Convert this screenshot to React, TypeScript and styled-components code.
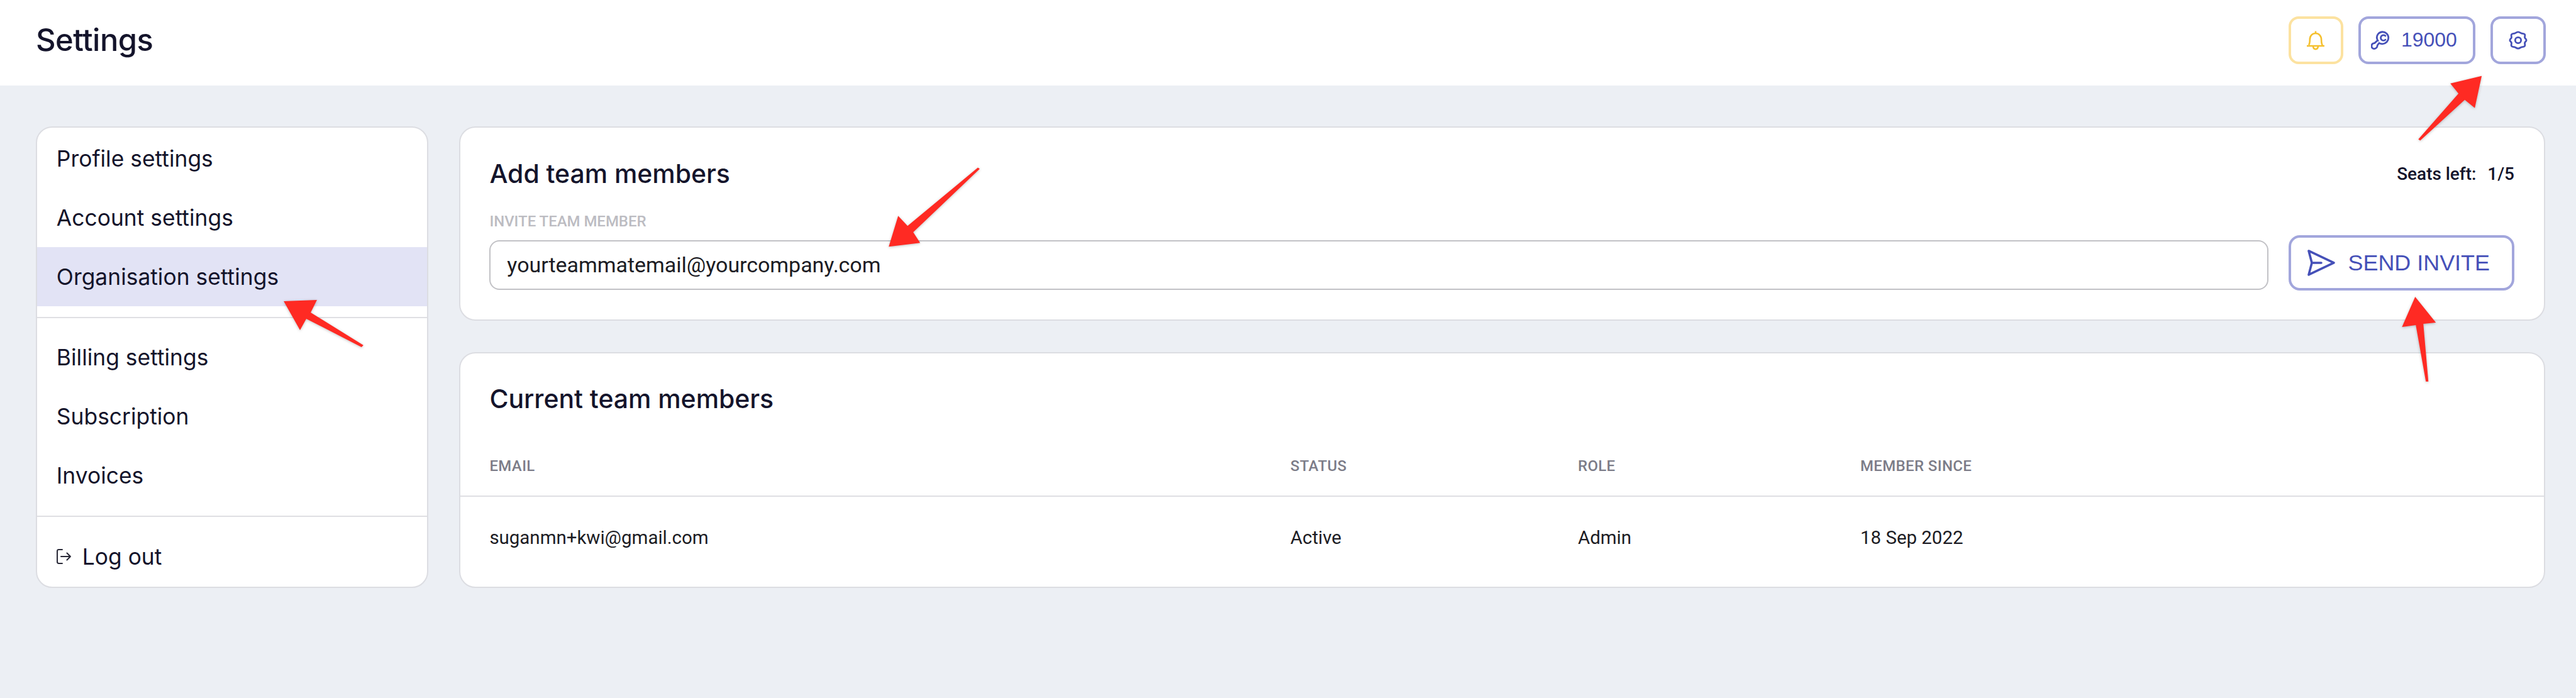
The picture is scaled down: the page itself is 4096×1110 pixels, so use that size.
import styled, { createGlobalStyle } from "styled-components";

const GlobalStyle = createGlobalStyle`
  html, body {
    margin: 0;
    padding: 0;
    overflow: hidden;
    background-color: #eceff4;
  }
  #root {
    zoom: 0.998;
    width: 4104px;
    height: 1112px;
  }
  * {
    box-sizing: border-box;
  }
`;

const Page = styled.div`
  position: relative;
  width: 4104px;
  height: 1112px;
  background-color: #eceff4;
  font-family: "Inter", "Liberation Sans", sans-serif;
  color: #14142b;
`;

const TopBar = styled.header`
  display: flex;
  align-items: center;
  justify-content: space-between;
  height: 136px;
  padding: 0 48px 8px 57px;
  background-color: white;
`;

const PageTitle = styled.h1`
  margin: 0;
  font-size: 49px;
  font-weight: 500;
  letter-spacing: -0.5px;
`;

const TopActions = styled.div`
  display: flex;
  gap: 24px;
`;

const ActionButton = styled.button<{ $warn?: boolean; $w: number }>`
  display: flex;
  align-items: center;
  justify-content: center;
  gap: 18px;
  width: ${(props) => props.$w}px;
  height: 76px;
  padding: 0;
  background-color: white;
  border: 4.1px solid ${(props) => (props.$warn ? "#fce2a0" : "#a2a6dc")};
  border-radius: 16px;
  color: #4550b8;
  font-family: "Liberation Sans", sans-serif;
  font-size: 32px;
`;

const CreditsButton = styled(ActionButton)`
  padding-right: 9px;
`;

const Main = styled.main`
  display: flex;
  align-items: flex-start;
  gap: 49px;
  padding: 65px 49px 0 57px;
`;

const SideMenu = styled.nav`
  flex: 0 0 625px;
  height: 736px;
  padding-top: 3px;
  background-color: white;
  border: 2.1px solid #dcdde2;
  border-radius: 26px;
  overflow: hidden;
`;

const MenuItem = styled.a<{ $active?: boolean }>`
  display: flex;
  align-items: center;
  gap: 18px;
  height: 94px;
  padding-left: 31px;
  background-color: ${(props) => (props.$active ? "#e2e3f5" : "transparent")};
  font-size: 35.500px;
  font-weight: 400;
`;

const MenuDivider = styled.div`
  height: 2px;
  margin: 17px 0 16px;
  background-color: #dfdfe3;
`;

const Content = styled.div`
  display: flex;
  flex: 1;
  flex-direction: column;
  gap: 50px;
`;

const Card = styled.section`
  background-color: white;
  border: 2.1px solid #dcdde2;
  border-radius: 26px;
`;

const InviteCard = styled(Card)`
  height: 310px;
  padding: 46px 47px 0 47px;
`;

const CardHeader = styled.div`
  display: flex;
  align-items: center;
  justify-content: space-between;
  height: 56px;
`;

const CardTitle = styled.h2`
  margin: 0;
  font-size: 41px;
  font-weight: 500;
`;

const Seats = styled.div`
  display: flex;
  gap: 18px;
  font-family: "Roboto", "Liberation Sans", sans-serif;
  font-size: 28px;
  font-weight: 500;
`;

const InviteLabel = styled.label`
  display: block;
  margin-top: 35px;
  height: 28px;
  line-height: 28px;
  color: #bcbcc2;
  font-family: "Roboto", "Liberation Sans", sans-serif;
  font-size: 24px;
  font-weight: 500;
`;

const InviteRow = styled.div`
  display: flex;
  align-items: flex-end;
  gap: 32px;
  margin-top: 7px;
`;

const EmailInput = styled.input`
  flex: 1;
  height: 79px;
  margin-bottom: 1px;
  padding: 0 26px;
  background-color: white;
  border: 2.1px solid #c2c2c6;
  border-radius: 16px;
  outline: none;
  color: #1c1c24;
  font-family: "Roboto", "Liberation Sans", sans-serif;
  font-size: 34px;
`;

const SendButton = styled.button`
  display: flex;
  align-items: center;
  gap: 21px;
  flex: 0 0 360px;
  height: 88px;
  padding: 0 0 0 26px;
  background-color: white;
  border: 4.1px solid #a2a6dc;
  border-radius: 18px;
  color: #4550b8;
  font-family: "Liberation Sans", sans-serif;
  font-size: 36px;
`;

const MembersCard = styled(Card)`
  height: 376px;
`;

const MembersTitle = styled(CardTitle)`
  height: 50px;
  margin: 48px 0 0 47px;
  line-height: 50px;
`;

const MemberGrid = styled.div<{ $head?: boolean }>`
  display: grid;
  grid-template-columns: 1276px 458px 450px 1fr;
  align-items: center;
  height: ${(props) => (props.$head ? "96px" : "130px")};
  padding-left: 47px;
  margin-top: ${(props) => (props.$head ? "35px" : "0")};
  border-bottom: ${(props) => (props.$head ? "2.1px solid #dfdfe3" : "none")};
  color: ${(props) => (props.$head ? "#7c7c88" : "#1c1c24")};
  font-family: "Roboto", "Liberation Sans", sans-serif;
  font-size: ${(props) => (props.$head ? "24px" : "29.500px")};
  font-weight: ${(props) => (props.$head ? 500 : 400)};
  letter-spacing: ${(props) => (props.$head ? "0.4px" : "0")};
`;

const Annotations = styled.svg`
  position: absolute;
  top: 0;
  left: 0;
  filter: drop-shadow(1px 2px 2px rgba(0, 0, 0, 0.25));
  pointer-events: none;
`;

const menuTop = ["Profile settings", "Account settings", "Organisation settings"];
const menuMid = ["Billing settings", "Subscription", "Invoices"];

function App() {
  return (
    <Page>
      <GlobalStyle />
      <TopBar>
        <PageTitle>Settings</PageTitle>
        <TopActions>
          <ActionButton $warn $w={87}>
            <svg width="32" height="32" viewBox="0 0 32 32" fill="none" stroke="#f5c02f" strokeWidth="2.6" strokeLinejoin="round">
              <path d="M16 1.5V5M5 23.5c1.6-2 1.8-4 1.8-8.500C6.800 9 10.800 5 16 5s9.200 4 9.200 10.500c0 4.500.2 6.500 1.800 8.500M2 25h28" />
              <path d="M12 25.500c.2 3 2 4.800 4 4.800s3.800-1.800 4-4.800" />
            </svg>
          </ActionButton>
          <CreditsButton $w={187}>
            <svg width="30" height="30" viewBox="0 0 32 32" fill="none" stroke="#4550b8" strokeWidth="3" strokeLinecap="round">
              <path d="M11.500 16.500C9.500 13 9.500 8.500 12.500 5 16 1 22.500.8 26.500 4.500c4.200 4 4.200 10.500.3 14.500-3.700 3.700-9 4-13 1.800L11 24.500c-.2 3.300-2.300 6-5.500 6-2.700 0-4.500-2-4.500-4.500 0-3 2.300-4.800 5-5l5-4.500z" />
              <path d="M24.500 8.500c-2-1.800-5.200-1.500-6.800.4-1.700 2-1.400 5 .6 6.600 2 1.500 4.700 1.200 6.200-.4" />
            </svg>
            19000
          </CreditsButton>
          <ActionButton $w={88}>
            <svg width="30" height="30" viewBox="0 0 32 32" fill="none" stroke="#4550b8" strokeWidth="3">
              <circle cx="16" cy="16" r="5" />
              <path d="M16 2c3 0 4 2 6 2.400 2.200.4 4.200-.2 5.300 1.800 1 1.900-.3 3.500 0 5.300.3 1.700 2.700 2.500 2.700 4.500s-2.400 2.800-2.700 4.500c-.3 1.800 1 3.400 0 5.300-1.100 2-3.100 1.400-5.300 1.800-2 .4-3 2.400-6 2.400s-4-2-6-2.400c-2.200-.4-4.200.2-5.300-1.800-1-1.900.3-3.500 0-5.300C4.400 18.800 2 18 2 16s2.400-2.800 2.700-4.500c.3-1.800-1-3.400 0-5.300C5.800 4.200 7.800 4.800 10 4.400 12 4 13 2 16 2z" />
            </svg>
          </ActionButton>
        </TopActions>
      </TopBar>
      <Main>
        <SideMenu>
          {menuTop.map((label) => (
            <MenuItem key={label} $active={label === "Organisation settings"}>
              {label}
            </MenuItem>
          ))}
          <MenuDivider />
          {menuMid.map((label) => (
            <MenuItem key={label}>{label}</MenuItem>
          ))}
          <MenuDivider />
          <MenuItem>
            <svg width="23" height="24" viewBox="0 0 23 24" fill="none" stroke="#2a2a38" strokeWidth="2" strokeLinecap="round" strokeLinejoin="round">
              <path d="M9 1H3.500C2 1 1 2 1 3.500v17C1 22 2 23 3.500 23H9" />
              <path d="M7 12h15M16.500 6.500 22 12l-5.500 5.500" />
            </svg>
            Log out
          </MenuItem>
        </SideMenu>
        <Content>
          <InviteCard>
            <CardHeader>
              <CardTitle>Add team members</CardTitle>
              <Seats>
                <span>Seats left:</span>
                <span>1/5</span>
              </Seats>
            </CardHeader>
            <InviteLabel htmlFor="invite">INVITE TEAM MEMBER</InviteLabel>
            <InviteRow>
              <EmailInput id="invite" defaultValue="yourteammatemail@yourcompany.com" />
              <SendButton>
                <svg width="44" height="42" viewBox="0 0 44 42" fill="none" stroke="#4550b8" strokeWidth="3.600" strokeLinejoin="round">
                  <path d="M2 2 42 21 2 40l5-19z" />
                  <path d="M7 21h15" strokeLinecap="round" />
                </svg>
                SEND INVITE
              </SendButton>
            </InviteRow>
          </InviteCard>
          <MembersCard>
            <MembersTitle>Current team members</MembersTitle>
            <MemberGrid $head>
              <span>EMAIL</span>
              <span>STATUS</span>
              <span>ROLE</span>
              <span>MEMBER SINCE</span>
            </MemberGrid>
            <MemberGrid>
              <span>suganmn+kwi@gmail.com</span>
              <span>Active</span>
              <span>Admin</span>
              <span>18 Sep 2022</span>
            </MemberGrid>
          </MembersCard>
        </Content>
      </Main>
      <Annotations width="4104" height="1112" viewBox="0 0 4104 1112" fill="#ff2a23">
        <polygon points="3954,121 3943,172 3927,159 3856,224 3853,222 3917,149 3904,133" />
        <polygon points="452,480 505,478 495,498 579,550 576,553 488,508 478,526" />
        <polygon points="1416,393 1431,344 1446,360 1558,267 1561,269 1455,370 1466,387" />
        <polygon points="3848,473 3881,514 3861,516 3869,608 3865,608 3849,518 3827,521" />
      </Annotations>
    </Page>
  );
}

export default App;
